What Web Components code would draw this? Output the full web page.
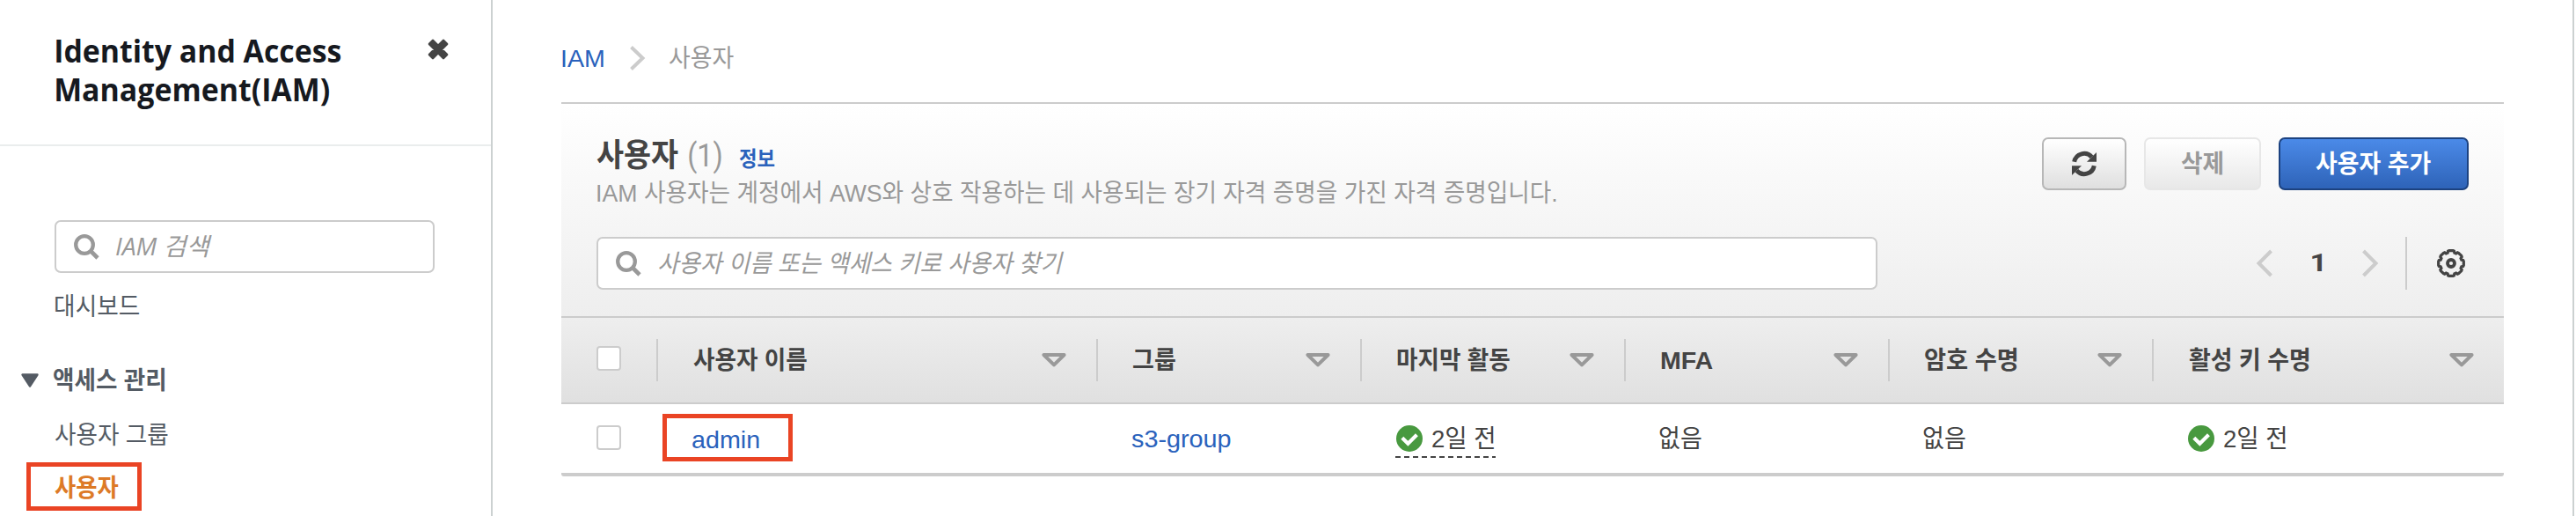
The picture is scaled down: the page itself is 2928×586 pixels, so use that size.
<!DOCTYPE html>
<html lang="ko">
<head>
<meta charset="utf-8">
<title>IAM</title>
<style>
html,body{margin:0;height:586px;overflow:hidden;background:#fff}
body{font:28px/40px "Liberation Sans","Noto Sans CJK KR",sans-serif;color:#444}
</style>
</head>
<body>
<iam-app></iam-app>
<script>
const ctx = document.createElement('canvas').getContext('2d');

function component(name, html, setup) {
  const tpl = document.createElement('template');
  tpl.innerHTML = html;
  customElements.define(name, class extends HTMLElement {
    connectedCallback() {
      if (this.shadowRoot) return;
      const root = this.attachShadow({ mode: 'open' });
      root.append(tpl.content.cloneNode(true));
      if (setup) setup(this, root);
    }
  });
}

/* One line of text condensed or widened so its ink spans exactly w pixels. */
component('fit-text', `<style>
:host{display:inline-block;white-space:nowrap;flex:none}
span{display:block;width:0;transform-origin:0 50%}
</style><span><slot></slot></span>`, (el, root) => {
  const w = +el.getAttribute('w');
  const drop = el.hasAttribute('drop') ? +el.getAttribute('drop') : 1;
  const cs = getComputedStyle(el);
  ctx.font = `${cs.fontStyle} ${cs.fontWeight} ${cs.fontSize} ${cs.fontFamily}`;
  const m = ctx.measureText(el.textContent.trim());
  const s = w / (m.actualBoundingBoxLeft + m.actualBoundingBoxRight);
  el.style.width = w + 'px';
  root.querySelector('span').style.transform =
    `translate(${m.actualBoundingBoxLeft * s}px,${drop}px) scaleX(${s})`;
});

/* Icons */
const gear = (() => {
  const p = [];
  for (let i = 0; i < 8; i++) {
    for (const [d, r] of [[-14, 14.2], [-9, 14.5], [9, 14.5], [14, 14.2], [18, 12.4], [27, 12.4]]) {
      const a = (i * 45 + d) * Math.PI / 180;
      p.push((16 + r * Math.sin(a)).toFixed(2) + ',' + (16 - r * Math.cos(a)).toFixed(2));
    }
  }
  return p.join(' ');
})();
const icons = {
  close: [24, 24, `<path d="M6 2l6 6 6-6 4 4-6 6 6 6-4 4-6-6-6 6-4-4 6-6-6-6z" fill="#444" stroke="#444" stroke-width="2.6" stroke-linejoin="round"/>`],
  search: [29, 29, `<circle cx="12" cy="12" r="9.8" fill="none" stroke="#999" stroke-width="4.3"/><path d="M19 19l8 8" stroke="#999" stroke-width="4.6"/>`],
  crumb: [17, 28, `<path d="M1.5 1.5L14.5 14 1.5 26.5" fill="none" stroke="#ccc" stroke-width="4"/>`],
  prev: [18, 32, `<path d="M16.5 2L2.5 16l14 14" fill="none" stroke="#ccc" stroke-width="4"/>`],
  next: [18, 32, `<path d="M1.5 2l14 14-14 14" fill="none" stroke="#ccc" stroke-width="4"/>`],
  expand: [20, 16, `<path d="M1.5 1.5h17L10 14.5z" fill="#545b64" stroke="#545b64" stroke-width="2.4" stroke-linejoin="round"/>`],
  sort: [28, 16, `<path d="M2.4 2h23.2L14 13.4z" fill="none" stroke="#999" stroke-width="4" stroke-linejoin="round"/>`],
  check: [30, 30, `<circle cx="15" cy="15" r="15" fill="#48993f"/><path d="M6.8 14.2l6.6 6.6 10-10" fill="none" stroke="#fff" stroke-width="4.2"/>`],
  refresh: [28, 28, `<path d="M2.7 11.8A11.4 11.4 0 0 1 22.6 6.4" fill="none" stroke="#444" stroke-width="5"/><path d="M28 1v10.8H17z" fill="#444"/><g transform="rotate(180 14 14)"><path d="M2.7 11.8A11.4 11.4 0 0 1 22.6 6.4" fill="none" stroke="#444" stroke-width="5"/><path d="M28 1v10.8H17z" fill="#444"/></g>`],
  gear: [32, 32, `<polygon points="${gear}" fill="none" stroke="#444" stroke-width="3.2"/><circle cx="16" cy="16" r="4" fill="none" stroke="#444" stroke-width="3.8"/>`]
};
component('ui-icon', `<style>:host{display:block;flex:none}svg{display:block;overflow:visible}</style>`, (el, root) => {
  const [w, h, body] = icons[el.getAttribute('name')];
  root.innerHTML += `<svg width="${w}" height="${h}" viewBox="0 0 ${w} ${h}">${body}</svg>`;
});

component('search-box', `<style>
:host{display:flex;align-items:center;box-sizing:border-box;height:60px;padding-left:20px;gap:20px;border:2px solid #ccc;border-radius:7px;background:#fff;color:#999;font-style:italic}
</style><ui-icon name="search"></ui-icon><slot></slot>`);

component('check-box', `<style>
:host{display:block;box-sizing:border-box;width:28px;height:28px;border:2px solid #ccc;border-radius:4px;background:#fff}
</style>`);

component('ui-button', `<style>
:host{display:flex;align-items:center;justify-content:center;box-sizing:border-box;height:60px;border:2px solid #b7b7b7;border-radius:7px;font-weight:700;background:linear-gradient(#fff,#dfdfdf)}
:host([kind=off]){color:#999;border-color:#e7e7e7;background:linear-gradient(#fff,#e8e8e8)}
:host([kind=primary]){color:#fff;border-color:#1c4280;background:linear-gradient(#4b8ae8,#2e63b8)}
</style><slot></slot>`);

component('marked-box', `<style>
:host{display:flex;align-items:center;box-sizing:border-box;border:5px solid #ea4424}
</style><slot></slot>`);

component('side-nav', `<style>
:host{display:block;box-sizing:border-box;width:560px;height:586px;border-right:2px solid #ccd1d1;color:#545b64}
header{display:flex;box-sizing:border-box;height:166px;padding:35px 48px 0 64px;border-bottom:2px solid #eaeded;justify-content:space-between}
h1{margin:0;font:700 36px/44px "Open Sans","Noto Sans",sans-serif;color:#16191f;display:flex;flex-direction:column}
header ui-icon{margin-top:9px}
search-box{margin:84px 64px 0 62px;font-family:"Open Sans","Noto Sans CJK KR",sans-serif}
.item{display:flex;height:40px;padding-left:62.5px;margin-top:18px}
.group{padding-left:24px;gap:17px;margin-top:44px;align-items:center;font-weight:700}
.group + .item{margin-top:22px}
marked-box{width:131px;height:55px;margin:11px 0 0 30px;padding:3px 0 0 27px;color:#dd7a27;font-weight:700}
</style>
<header><h1><fit-text w="323.5">Identity and Access</fit-text><fit-text w="310">Management(IAM)</fit-text></h1><ui-icon name="close"></ui-icon></header>
<search-box><fit-text w="109" drop="-1" style="margin-left:-1px">IAM 검색</fit-text></search-box>
<div class="item"><fit-text w="95.5">대시보드</fit-text></div>
<div class="item group"><ui-icon name="expand"></ui-icon><fit-text w="126">액세스 관리</fit-text></div>
<div class="item"><fit-text w="128">사용자 그룹</fit-text></div>
<marked-box><fit-text w="73">사용자</fit-text></marked-box>`);

component('bread-crumb', `<style>
:host{display:flex;align-items:center;height:40px;padding-left:1px;color:#999}
.l{color:#2a62bc}ui-icon{margin:0 28px 0 29px}
</style><fit-text class="l" w="47.5">IAM</fit-text><ui-icon name="crumb"></ui-icon><fit-text w="72.5">사용자</fit-text>`);

component('panel-head', `<style>
:host{display:block;box-sizing:border-box;height:241px;padding:36px 40px 0;background:linear-gradient(#fff,#eee)}
.top{display:flex;justify-content:space-between}
.title{display:flex;align-items:baseline;height:45px;font-size:36px;line-height:45px;font-weight:700}
.count{margin-left:11.5px;font-weight:400;color:#999}
.info{margin-left:21px;font-size:24px;color:#2a62bc}
.count,.page{font-family:Roboto,"Liberation Sans",sans-serif}
.page{margin:0 46px 0 45px}
.desc{display:flex;height:40px;padding-left:1px;color:#999}
.actions{display:flex;gap:20px;margin-top:2px}
.tools{display:flex;justify-content:space-between;align-items:center;margin-top:30px}
search-box{width:1456px}
.pages{display:flex;align-items:center;font-weight:700}
.rule{width:2px;height:60px;background:#ccc;margin:0 34px 0 31px}
</style>
<div class="top"><div>
<div class="title"><fit-text w="93" drop="0">사용자</fit-text><fit-text class="count" w="36.5" drop="0">(1)</fit-text><fit-text class="info" w="41" drop="0">정보</fit-text></div>
<div class="desc"><fit-text w="1090">IAM 사용자는 계정에서 AWS와 상호 작용하는 데 사용되는 장기 자격 증명을 가진 자격 증명입니다.</fit-text></div>
</div><div class="actions">
<ui-button style="width:96px"><ui-icon name="refresh"></ui-icon></ui-button>
<ui-button kind="off" style="width:133px"><fit-text w="47.5" style="margin-right:2px">삭제</fit-text></ui-button>
<ui-button kind="primary" style="width:216px"><fit-text w="131.5">사용자 추가</fit-text></ui-button>
</div></div>
<div class="tools"><search-box><fit-text w="460">사용자 이름 또는 액세스 키로 사용자 찾기</fit-text></search-box>
<div class="pages"><ui-icon name="prev"></ui-icon><fit-text class="page" w="11" drop="0">1</fit-text><ui-icon name="next"></ui-icon><span class="rule"></span><ui-icon name="gear" style="margin-right:4px"></ui-icon></div></div>`);

component('head-cell', `<style>
:host{display:flex;align-items:center;justify-content:space-between;box-sizing:border-box;height:48px;padding:0 34px 0 40px}
:host(:not([last])){border-right:2px solid #ccc;padding-right:34px}
</style><slot></slot><ui-icon name="sort"></ui-icon>`);

component('user-table', `<style>
:host{display:block;border-bottom:4px solid #ccc;border-radius:0 0 3px 3px}
.row{display:grid;grid-template-columns:110px 500px repeat(4,300px) 1fr;align-items:center}
.head{height:96px;border:solid #ccc;border-width:2px 0;background:linear-gradient(#eee,#e0e0e0);font-weight:700}
.pick{display:flex;align-items:center;box-sizing:border-box;height:48px;padding:0 0 4px 40px}
.head .pick{border-right:2px solid #ccc}
.body{height:78px}
.cell{display:flex;align-items:center;padding-left:38px}
.body .pick{padding-bottom:2px}
.link{color:#2a62bc}
marked-box{width:148px;height:54px;margin:-2px 0 0 5px;padding:4px 0 0 28.5px}
.state{display:flex;align-items:center;gap:11px;box-sizing:border-box;height:37px;padding:0 2px 7px 1px}
.dash{background:repeating-linear-gradient(90deg,#444 0 6px,transparent 6px 10px) 0 100%/100% 2px no-repeat}
</style>
<div class="row head"><div class="pick"><check-box></check-box></div>
<head-cell><fit-text w="129">사용자 이름</fit-text></head-cell>
<head-cell><fit-text w="48">그룹</fit-text></head-cell>
<head-cell><fit-text w="128">마지막 활동</fit-text></head-cell>
<head-cell><fit-text w="59">MFA</fit-text></head-cell>
<head-cell><fit-text w="104">암호 수명</fit-text></head-cell>
<head-cell last><fit-text w="136">활성 키 수명</fit-text></head-cell></div>
<div class="row body"><div class="pick"><check-box></check-box></div>
<div><marked-box><fit-text class="link" w="75.5">admin</fit-text></marked-box></div>
<div class="cell"><fit-text class="link" w="113">s3-group</fit-text></div>
<div class="cell" style="padding-top:7px"><div class="state dash"><ui-icon name="check"></ui-icon><fit-text w="70">2일 전</fit-text></div></div>
<div class="cell"><fit-text w="48">없음</fit-text></div>
<div class="cell"><fit-text w="48">없음</fit-text></div>
<div class="cell" style="padding-top:7px"><div class="state"><ui-icon name="check"></ui-icon><fit-text w="70">2일 전</fit-text></div></div></div>`);

component('iam-app', `<style>
:host{display:flex;width:2928px;height:586px;background:#fff}
main{flex:1;box-sizing:border-box;padding:46px 78px 0 78px;border-right:2px solid #ccd1d1;margin-right:2px}
.panel{margin-top:30px;border-top:2px solid #ccc}
</style><side-nav></side-nav><main><bread-crumb></bread-crumb><div class="panel"><panel-head></panel-head><user-table></user-table></div></main>`);
</script>
</body>
</html>
